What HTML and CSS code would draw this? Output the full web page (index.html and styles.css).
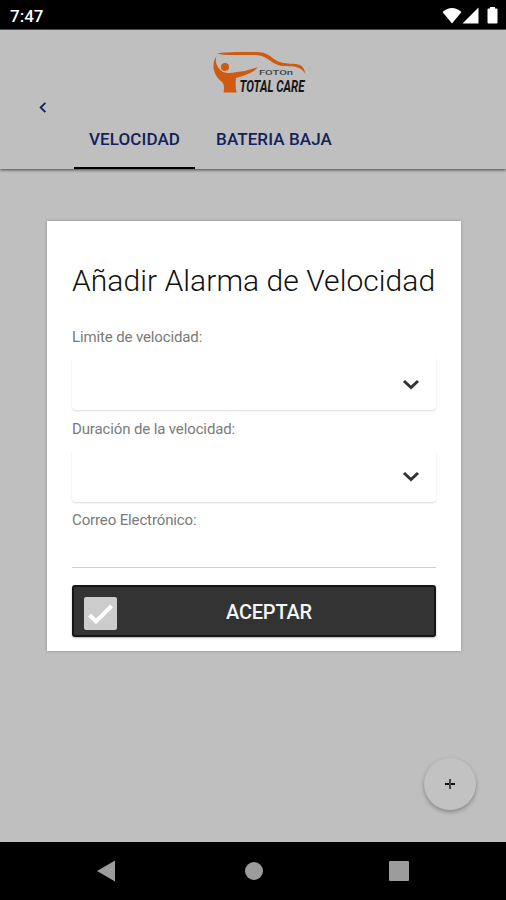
FILE: index.html
```html
<!DOCTYPE html>
<html lang="es">
<head>
    <meta charset="UTF-8">
    <meta name="viewport" content="width=device-width, initial-scale=1.0">
    <title>Alarmas</title>
    <link rel="stylesheet" href="styles.css">
</head>
<body>
    <div class="statusBar">
        <span class="clock">7:47</span>
        <svg class="statusIcons" width="58" height="20" viewBox="0 0 58 20">
            <path d="M0.500 6Q10 -2 19.500 6L10 17.500z"/>
            <path d="M36.500 1.500V17.500H20.500z"/>
            <path d="M46.500 2.500H48V1H53V2.500H54.500Q55.500 2.500 55.500 3.500V16.500Q55.500 17.500 54.500 17.500H46.500Q45.500 17.500 45.500 16.500V3.500Q45.500 2.500 46.500 2.500z"/>
        </svg>
    </div>

    <header class="header">
        <svg class="logo" width="104" height="50" viewBox="0 0 104 50">
            <path class="orange" d="M6 2.500Q14 1 25 1H45C61 1 60 10 73 12C84 14 92 10 94.500 23C87 12 79 17 69 14.500C58 12 57 4 43 4H18Q12 4 6 2.500Z"/>
            <circle class="orange" cx="14" cy="16" r="4"/>
            <path class="orange" d="M5.500 5C3.500 11 6 17 12 21Q17 23 26 21Q36 20 47 16L43 20Q36 24 25 27Q24 33 25.500 41.500H12.500Q14 34 11 31C2 24 0 13 5.500 5z"/>
            <text class="logoSmall" x="48" y="24" textLength="34" lengthAdjust="spacingAndGlyphs">FOTOn</text>
            <text class="logoBig" x="28.500" y="41" textLength="65" lengthAdjust="spacingAndGlyphs">TOTAL CARE</text>
        </svg>
        <svg class="back" width="12" height="14" viewBox="0 0 12 14">
            <path d="M8.500 2L3.500 7L8.500 12"/>
        </svg>
        <nav class="tabs">
            <a class="tab active">VELOCIDAD</a>
            <a class="tab">BATERIA BAJA</a>
        </nav>
    </header>

    <main class="content">
        <form class="modal">
            <h1 class="title">Añadir Alarma de Velocidad</h1>
            <label class="label limite">Limite de velocidad:</label>
            <div class="select">
                <svg width="18" height="12" viewBox="0 0 18 12"><path d="M2 2L9 8.500L16 2"/></svg>
            </div>
            <label class="label duracion">Duración de la velocidad:</label>
            <div class="select">
                <svg width="18" height="12" viewBox="0 0 18 12"><path d="M2 2L9 8.500L16 2"/></svg>
            </div>
            <label class="label correo">Correo Electrónico:</label>
            <div class="field"></div>
            <div class="accept">
                <svg class="check" width="33" height="33" viewBox="0 0 33 33">
                    <rect width="33" height="33" rx="2"/>
                    <path d="M5.500 18L12 24.500L27.500 9"/>
                </svg>
                <span class="acceptText">ACEPTAR</span>
            </div>
        </form>
        <div class="fab">
            <svg width="10" height="10" viewBox="0 0 10 10"><path class="plusH" d="M0 5H10"/><path class="plusV" d="M5 0V10"/></svg>
        </div>
    </main>

    <footer class="navBar">
        <svg width="18" height="22" viewBox="0 0 18 22"><path d="M0 11L18 0.500V21.500z"/></svg>
        <svg class="home" width="18" height="18" viewBox="0 0 18 18"><circle cx="9" cy="9" r="9"/></svg>
        <svg width="20" height="20" viewBox="0 0 20 20"><rect width="20" height="20" rx="1"/></svg>
    </footer>
</body>
</html>
```

FILE: styles.css
```css
* {
    box-sizing: border-box;
}

body {
    margin: 0;
    height: 900px;
    display: flex;
    flex-direction: column;
    font-family: Roboto, "Liberation Sans", sans-serif;
    background-color: #bfbfbf;
    overflow: hidden;
}

.statusBar {
    height: 30px;
    flex: none;
    display: flex;
    justify-content: space-between;
    align-items: center;
    padding: 2px 6px 0 10px;
    background-color: #000;
    border-bottom: 1px solid #555;
}

.clock {
    color: #fff;
    font-size: 17px;
    font-weight: 500;
}

.statusIcons {
    fill: #fff;
}

.header {
    height: 139px;
    flex: none;
    display: flex;
    flex-direction: column;
    align-items: flex-start;
    padding-top: 21px;
    background-color: #bfbfbf;
    box-shadow: 0 1px 3px rgba(0, 0, 0, 0.65);
}

.logo {
    align-self: center;
    margin-left: 20px;
    overflow: visible;
}

.orange {
    fill: #cf5b11;
}

.logoSmall {
    font-size: 8px;
    font-weight: 500;
    fill: #444;
}

.logoBig {
    font-size: 16px;
    font-weight: bold;
    font-style: italic;
    fill: #151515;
}

.back {
    margin: 0 0 0 37px;
    fill: none;
    stroke: #14215a;
    stroke-width: 2;
}

.tabs {
    display: flex;
    gap: 6px;
    margin: -4px 0 0 74px;
}

.tab {
    height: 59px;
    padding: 0 15px;
    line-height: 59px;
    font-size: 17px;
    font-weight: 500;
    letter-spacing: 0.1px;
    color: #14215a;
}

.active {
    border-bottom: 2px solid #000;
}

.content {
    flex: 1;
    display: flex;
    flex-direction: column;
    align-items: center;
    padding-top: 52px;
}

.modal {
    width: 414px;
    height: 430px;
    flex: none;
    margin-left: 2px;
    padding: 40px 25px 0;
    background-color: #fff;
    box-shadow: 0 0 3px rgba(0, 0, 0, 0.25);
}

.title {
    margin: 0;
    font-size: 30px;
    line-height: 40px;
    font-weight: 300;
    letter-spacing: 0.05px;
    white-space: nowrap;
    color: #111;
}

.label {
    display: block;
    font-size: 15px;
    line-height: 20px;
    letter-spacing: -0.13px;
    color: #7a7a7a;
}

.limite {
    margin-top: 26px;
}

.select {
    height: 53px;
    display: flex;
    align-items: center;
    justify-content: flex-end;
    padding: 2px 16px 0 0;
    margin-top: 10px;
    border-radius: 4px;
    box-shadow: 0 1px 2px rgba(0, 0, 0, 0.14);
}

.select svg {
    fill: none;
    stroke: #333;
    stroke-width: 3;
}

.duracion {
    margin-top: 9px;
}

.correo {
    margin-top: 8px;
}

.field {
    height: 38px;
    border-bottom: 1px solid #d0d0d0;
}

.accept {
    height: 52px;
    display: flex;
    align-items: center;
    margin-top: 17px;
    padding-left: 10px;
    border: 2px solid #151515;
    border-radius: 3px;
    background-color: #333;
    box-shadow: 0 1px 2px rgba(0, 0, 0, 0.3);
}

.check {
    margin-top: 4px;
    fill: #ccc;
}

.check path {
    fill: none;
    stroke: #fff;
    stroke-width: 4;
}

.acceptText {
    margin: 1px 0 0 109px;
    font-size: 20px;
    font-weight: 500;
    letter-spacing: -0.2px;
    color: #f5f5f5;
}

.fab {
    width: 52px;
    height: 52px;
    display: flex;
    align-items: center;
    justify-content: center;
    align-self: flex-end;
    margin: 107px 30px 0 0;
    border-radius: 50%;
    background-color: #c2c2c2;
    box-shadow: 0 2px 4px rgba(0, 0, 0, 0.3);
}

.fab path {
    stroke: #111;
    stroke-width: 2;
}

.fab .plusV {
    stroke: #444;
}

.navBar {
    height: 58px;
    flex: none;
    display: flex;
    align-items: center;
    justify-content: space-between;
    padding: 0 97px;
    background-color: #000;
    fill: #9c9c9c;
}

.home {
    margin-left: 3px;
}
```
